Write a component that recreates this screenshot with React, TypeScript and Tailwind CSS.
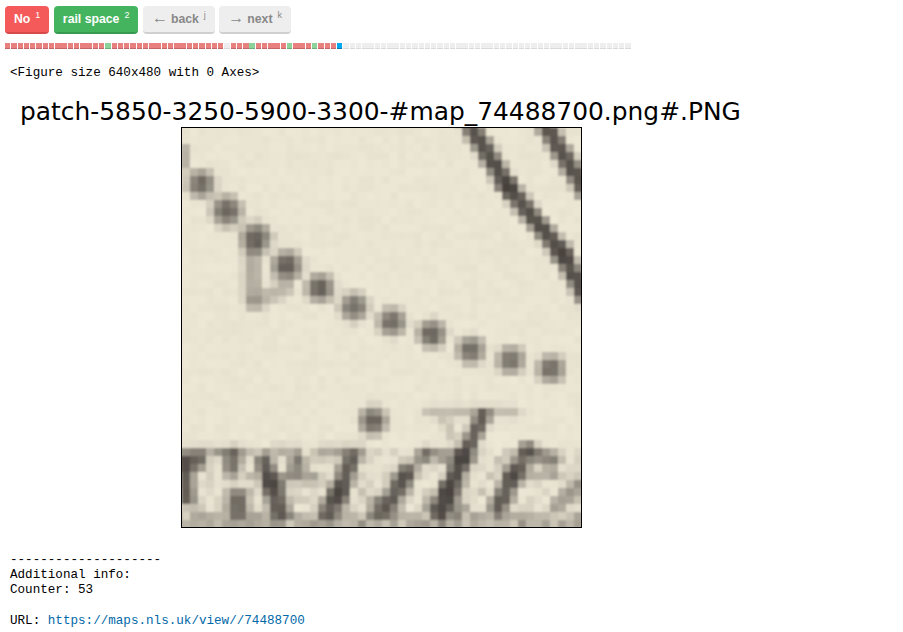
import React from "react";

type Tag = "no" | "rail" | "skip" | "current" | "todo";

// strokes of the map patch, in page pixels: x1, y1, x2, y2, radius, strength
const strokes: number[][] = [
  // double line top right
  [468, 122, 508, 187, 9, 0.9],
  [508, 187, 562, 253, 9, 0.9],
  [562, 253, 586, 298, 9, 0.88],
  [543, 122, 586, 192, 9, 0.88],
  // dotted line
  [201, 184, 201, 184, 13, 0.72],
  [227, 211, 227, 211, 14, 0.76],
  [256, 238, 256, 238, 14, 0.76],
  [287, 266, 287, 266, 14, 0.8],
  [320, 288, 320, 288, 13, 0.78],
  [354, 307, 354, 307, 13, 0.7],
  [392, 322, 392, 322, 13, 0.72],
  [432, 334, 432, 334, 13, 0.76],
  [471, 350, 471, 350, 13, 0.7],
  [511, 360, 511, 360, 13, 0.66],
  [551, 369, 551, 369, 13, 0.7],
  [373, 421, 373, 421, 13, 0.78],
  [183, 150, 183, 165, 7, 0.3],
  // loop under the dots
  [253, 250, 253, 298, 9, 0.34],
  [255, 303, 285, 288, 8, 0.28],
  // writing at the bottom
  [182, 452, 245, 452, 6, 0.3],
  [272, 450, 298, 450, 5, 0.25],
  [318, 450, 362, 450, 5, 0.3],
  [182, 461, 198, 461, 9, 0.72],
  [185, 465, 187, 498, 8, 0.8],
  [232, 456, 232, 468, 9, 0.66],
  [264, 463, 272, 485, 9, 0.8],
  [272, 485, 280, 512, 10, 0.8],
  [238, 498, 238, 512, 10, 0.72],
  [297, 462, 296, 470, 9, 0.55],
  [270, 480, 315, 478, 7, 0.25],
  [352, 458, 338, 495, 9, 0.8],
  [338, 495, 328, 512, 10, 0.8],
  [400, 478, 425, 455, 7, 0.42],
  [407, 475, 385, 510, 9, 0.8],
  [375, 502, 378, 512, 8, 0.4],
  [483, 416, 463, 458, 8, 0.8],
  [463, 458, 448, 492, 9, 0.88],
  [448, 492, 440, 512, 10, 0.88],
  [433, 507, 460, 507, 7, 0.5],
  [430, 412, 515, 412, 6, 0.25],
  [445, 420, 455, 440, 5, 0.2],
  [425, 453, 462, 457, 7, 0.42],
  [553, 460, 527, 451, 8, 0.55],
  [527, 451, 513, 475, 8, 0.68],
  [513, 475, 498, 508, 9, 0.8],
  [520, 475, 557, 475, 6, 0.3],
  [557, 505, 582, 486, 8, 0.4],
  [182, 521, 582, 521, 7, 0.16],
];

const distance = (px: number, py: number, s: number[]) => {
  const dx = s[2] - s[0];
  const dy = s[3] - s[1];
  const len = dx * dx + dy * dy;
  const t = len === 0 ? 0 : Math.max(0, Math.min(1, ((px - s[0]) * dx + (py - s[1]) * dy) / len));
  return Math.hypot(px - s[0] - t * dx, py - s[1] - t * dy);
};

const hash = (col: number, row: number) => {
  const v = Math.sin(col * 12.9898 + row * 78.233) * 43758.5453;
  return v - Math.floor(v);
};

const cellColor = (col: number, row: number) => {
  const px = 182 + col * 8 + 4;
  const py = 128 + row * 8 + 4;
  let light = 1;
  for (const s of strokes) {
    const f = Math.max(0, 1 - distance(px, py, s) / (s[4] * 1.5));
    light *= 1 - s[5] * Math.min(1, f * 1.4);
  }
  // the writing at the bottom is mottled
  if (py > 448) light *= 1 - 0.3 * hash(col + 7, row + 3) * hash(col, row + 11);
  if (py > 508) light *= 1 - 0.3 * hash(col + 3, row);
  const n = (hash(col, row) - 0.5) * 6;
  const r = Math.round(70 + (234 - 70) * light + n);
  const g = Math.round(64 + (229 - 64) * light + n);
  const b = Math.round(60 + (211 - 60) * light + n);
  return `rgb(${r},${g},${b})`;
};

const greens = [16, 39, 45, 49];

const tagFor = (i: number): Tag => {
  if (i === 53) return "current";
  if (i > 53) return "todo";
  if (i === 35) return "skip";
  if (greens.includes(i)) return "rail";
  return "no";
};

const tagClass: Record<Tag, string> = {
  no: "bg-[#e88080] border-[#c46464]",
  rail: "bg-[#8dd298] border-[#6bae76]",
  skip: "bg-[#eeeeee] border-[#d9d9d9]",
  current: "bg-[#00a8f0] border-[#0078b0]",
  todo: "bg-[#eeeeee] border-[#d9d9d9]",
};

type KeyProps = { label: string; hint: string; arrow?: string; className: string };

const Key = ({ label, hint, arrow, className }: KeyProps) => (
  <button
    className={`h-[28px] rounded-[4px] border-b-2 px-[9px] text-[12.25px] font-bold ${className}`}
  >
    {arrow && <span className="mr-[3px] text-[16px] leading-none font-normal">{arrow}</span>}
    {label}
    <sup className="ml-[5px] text-[9px] font-normal">{hint}</sup>
  </button>
);

export default function App() {
  const cells = [];
  for (let row = -2; row < 52; row++) {
    for (let col = -2; col < 52; col++) {
      cells.push(<rect key={`${col}-${row}`} x={col * 8} y={row * 8} width={8} height={8} fill={cellColor(col, row)} />);
    }
  }

  return (
    <div className="min-h-[632px] bg-white font-['Liberation_Sans',sans-serif] text-black">
      <div className="flex gap-[4.5px] pl-[5px] pt-[6px]">
        <Key label="No" hint="1" className="bg-[#f45a5a] border-[#d84a4a] text-white" />
        <Key label="rail space" hint="2" className="bg-[#45b45f] border-[#389a50] text-white" />
        <Key arrow="←" label="back" hint="j" className="bg-[#eeeeee] border-[#d0d0d0] text-[#888888]" />
        <Key arrow="→" label="next" hint="k" className="bg-[#eeeeee] border-[#d0d0d0] text-[#888888]" />
      </div>

      <div className="mt-[9px] flex h-[6px] pl-[5px]">
        {Array.from({ length: 100 }, (_, i) => (
          <div key={i} className={`h-[6px] w-[5.41px] mr-[0.86px] shrink-0 border-b ${tagClass[tagFor(i)]}`} />
        ))}
      </div>

      <pre className="ml-[10px] mt-[17px] font-['Liberation_Mono',monospace] text-[12.6px] leading-[15.25px]">
        {"<Figure size 640x480 with 0 Axes>"}
      </pre>

      <div className="mt-[16px] ml-[20px] flex w-fit flex-col items-center">
        <h1 className="whitespace-nowrap font-['DejaVu_Sans',sans-serif] text-[24.9px] leading-[29px]">
          patch-5850-3250-5900-3300-#map_74488700.png#.PNG
        </h1>
        <div className="ml-[3px] mt-[1px] border border-black">
          <svg width={399} height={399} viewBox="0 0 399 399" className="block">
            <defs>
              <filter id="soft" x="0" y="0" width="100%" height="100%">
                <feGaussianBlur stdDeviation="1.1" />
              </filter>
            </defs>
            <g filter="url(#soft)" shapeRendering="crispEdges">
              {cells}
            </g>
          </svg>
        </div>
      </div>

      <pre className="ml-[10px] mt-[24.5px] font-['Liberation_Mono',monospace] text-[12.6px] leading-[15.25px]">
        {"--------------------\nAdditional info:\nCounter: 53\n\nURL: "}
        <a href="#" className="text-[#0068a8]">
          https://maps.nls.uk/view//74488700
        </a>
      </pre>
    </div>
  );
}
